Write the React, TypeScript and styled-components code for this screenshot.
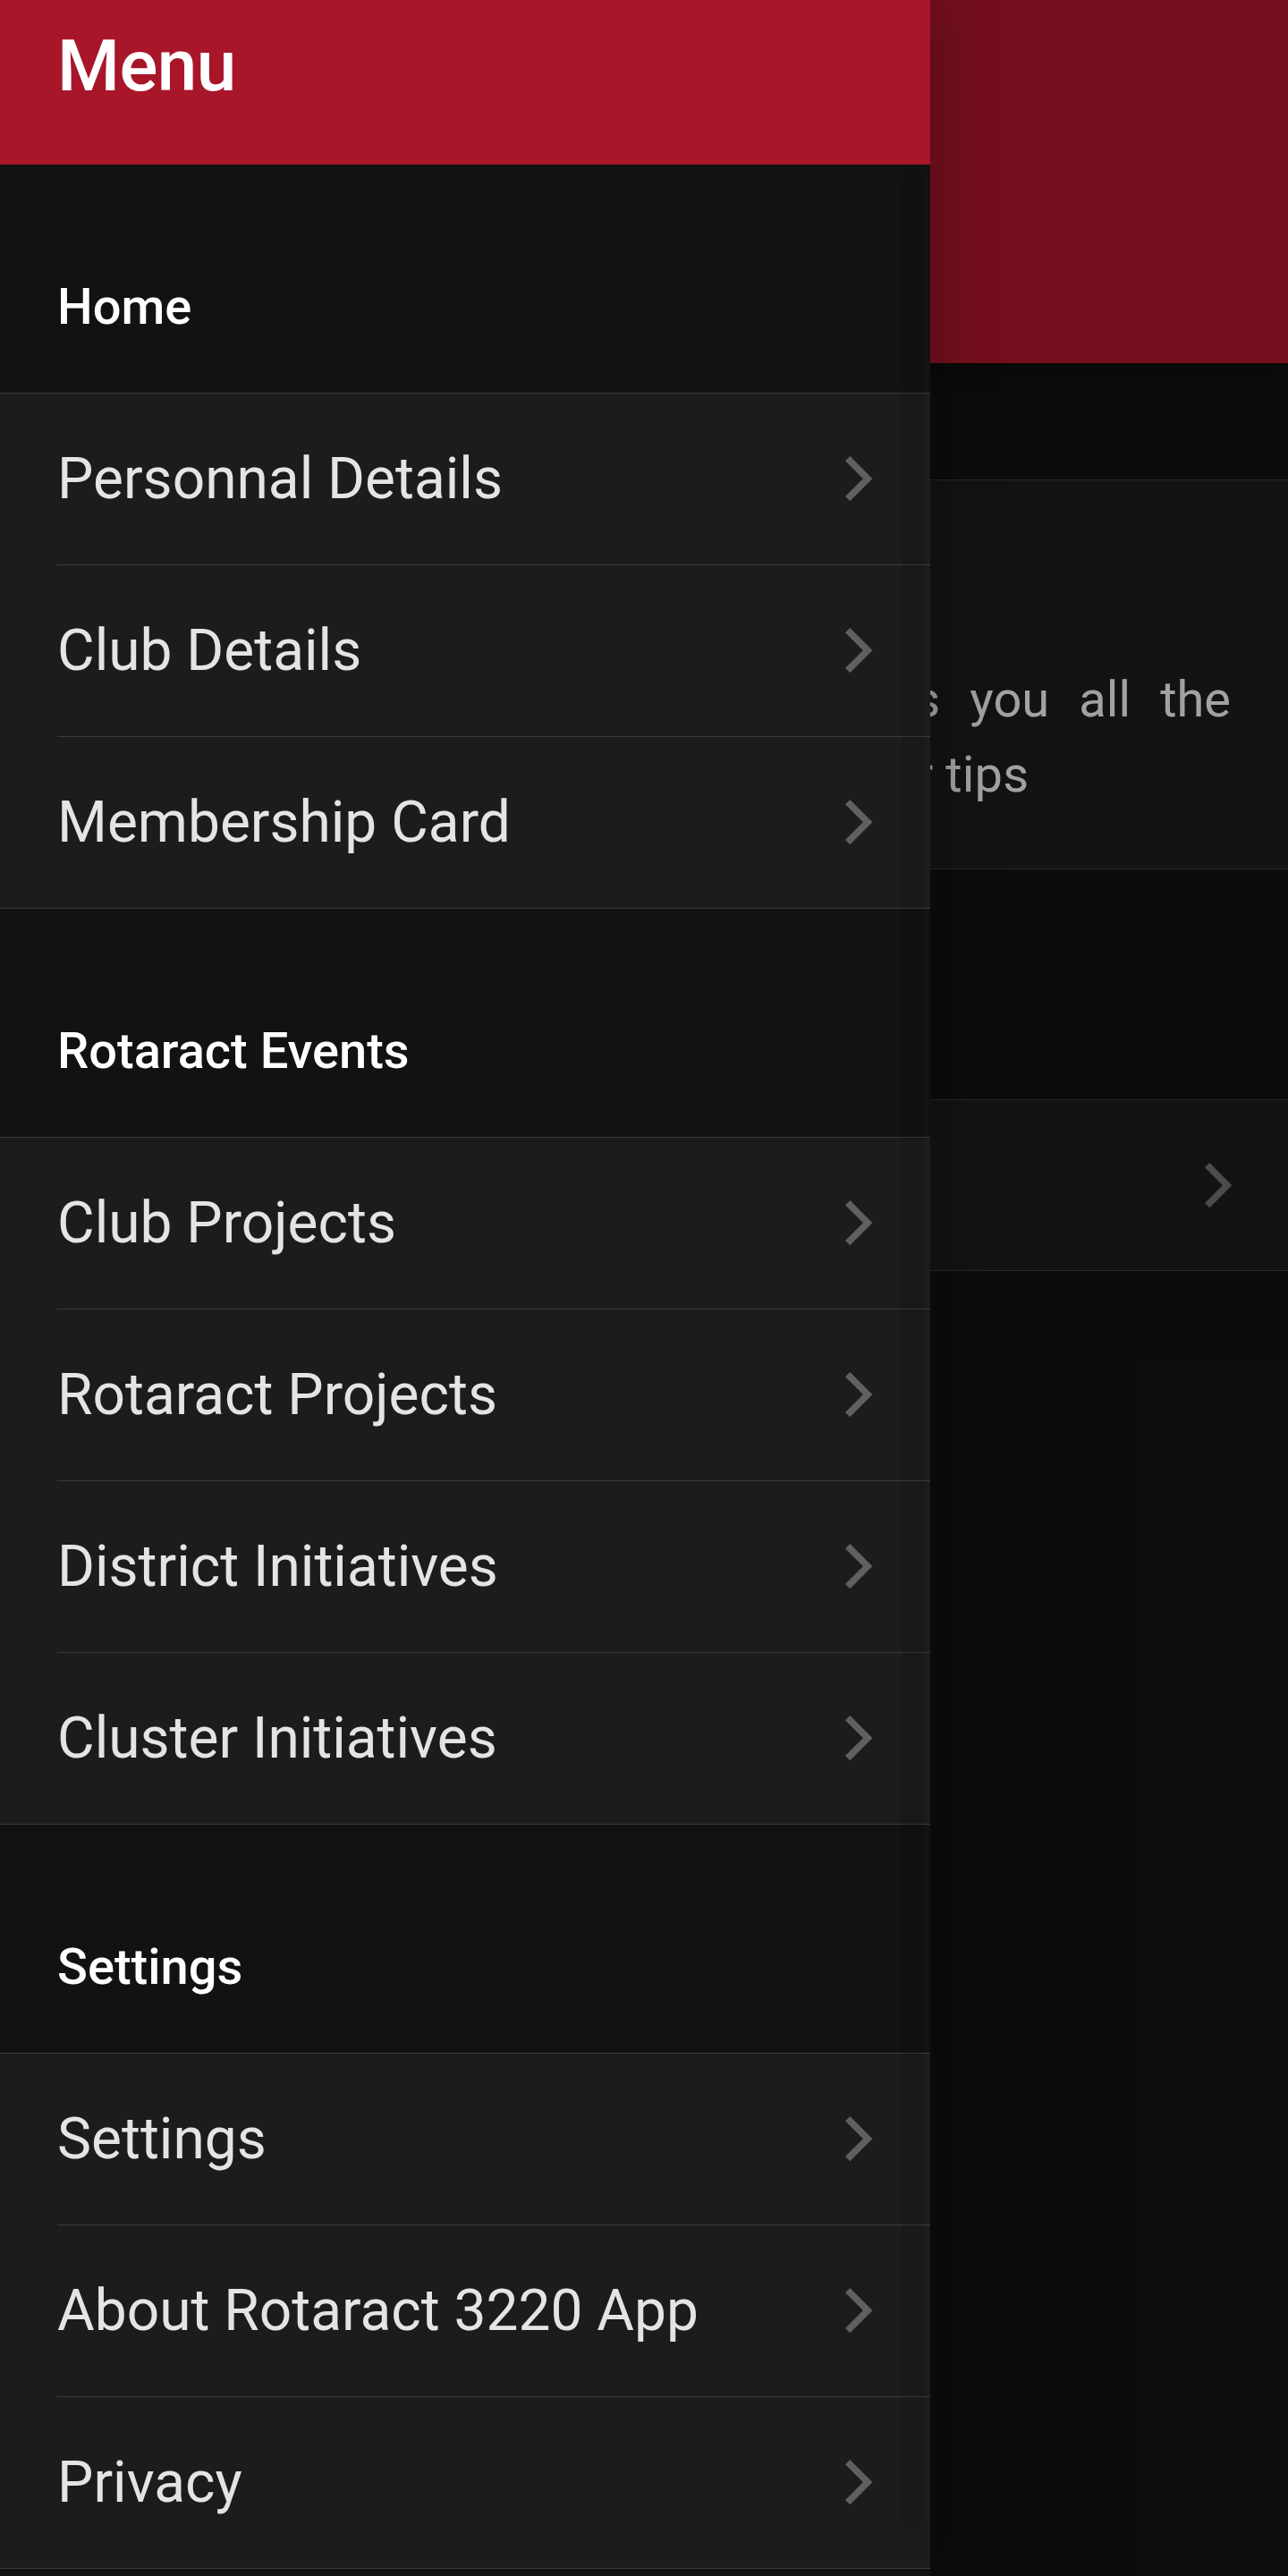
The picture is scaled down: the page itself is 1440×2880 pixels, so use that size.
import React from "react";
import styled, { createGlobalStyle } from "styled-components";

const GlobalStyle = createGlobalStyle`
  html, body {
    margin: 0;
    padding: 0;
    background: #121212;
  }
  * { box-sizing: border-box; }
`;

const Screen = styled.div`
  position: relative;
  width: 1440px;
  height: 2880px;
  overflow: hidden;
  background: #121212;
  font-family: Roboto, "Liberation Sans", Arial, sans-serif;
`;

/* ---------- underlying page (dimmed behind the menu) ---------- */

const PageHeader = styled.header`
  position: relative;
  z-index: 1;
  height: 406px;
  background: #a8162a;
  box-shadow: 0 8px 24px rgba(0, 0, 0, 0.35);
`;

const PageBody = styled.main`
  padding-top: 130px;
`;

const Card = styled.section`
  background: #1c1c1c;
  border-top: 1px solid #3a3a3a;
  border-bottom: 1px solid #3a3a3a;
  padding: 203px 64px 63px;
`;

const CardText = styled.p`
  margin: 0;
  font-size: 56px;
  line-height: 84px;
  color: #e8e8e8;
`;

const TextLine = styled.span<{ $justify?: boolean }>`
  display: block;
  text-align: ${(p) => (p.$justify ? "justify" : "left")};
  text-align-last: ${(p) => (p.$justify ? "justify" : "left")};
  letter-spacing: ${(p) => (p.$justify ? "0" : "0.15px")};
`;

const PageGap = styled.div`
  height: 257px;
`;

const PageRow = styled.div`
  height: 192px;
  background: #1c1c1c;
  border-top: 1px solid #3a3a3a;
  border-bottom: 1px solid #3a3a3a;
  display: flex;
  align-items: center;
  justify-content: flex-end;
  padding: 0 63px 0 64px;
`;

const Backdrop = styled.div`
  position: absolute;
  inset: 0;
  z-index: 5;
  background: rgba(0, 0, 0, 0.3);
`;

/* ---------- drawer ---------- */

const Drawer = styled.nav`
  position: absolute;
  left: 0;
  top: 0;
  z-index: 10;
  width: 1040px;
  height: 2880px;
  background: #121212;
  box-shadow: 16px 0 64px rgba(0, 0, 0, 0.22);
  display: flex;
  flex-direction: column;
`;

const DrawerHeader = styled.div`
  height: 184px;
  flex: none;
  background: #a8162a;
  padding: 34px 64px 0;
`;

const DrawerTitle = styled.h1`
  margin: 0;
  font-size: 80px;
  line-height: 80px;
  font-weight: 500;
  color: #ffffff;
  letter-spacing: -0.5px;
`;

const ScrollThumb = styled.div`
  position: absolute;
  top: 190px;
  left: 1008px;
  width: 24px;
  height: 2637px;
  border-radius: 12px;
  background: rgba(0, 0, 0, 0.1);
  pointer-events: none;
`;

const SectionHeader = styled.div`
  height: 255px;
  display: flex;
  align-items: flex-end;
  padding: 0 64px 68px;
  font-size: 56px;
  line-height: 56px;
  font-weight: 500;
  color: #ffffff;
`;

const Group = styled.ul`
  list-style: none;
  margin: 0;
  padding: 0;
  border-top: 1px solid #3a3a3a;
`;

const Row = styled.li<{ $last?: boolean }>`
  height: 192px;
  padding-left: 64px;
  background: #1c1c1c;
  border-bottom: ${(p) => (p.$last ? "1px solid #3a3a3a" : "none")};
`;

const RowInner = styled.div<{ $last?: boolean }>`
  height: 100%;
  display: flex;
  align-items: center;
  justify-content: space-between;
  padding-right: 65px;
  border-bottom: ${(p) => (p.$last ? "none" : "1px solid #3a3a3a")};
`;

const RowLabel = styled.span`
  font-size: 64px;
  color: #e4e4e4;
  white-space: nowrap;
`;

const ChevronSvg = styled.svg<{ $color: string }>`
  flex: none;
  width: 30.5px;
  height: 50.3px;
  color: ${(p) => p.$color};
`;

const Chevron = ({ color = "#606060" }: { color?: string }) => (
  <ChevronSvg $color={color} viewBox="167 95 195 322" aria-hidden="true">
    <polyline
      points="184 112 328 256 184 400"
      fill="none"
      stroke="currentColor"
      strokeWidth="48"
      strokeLinecap="butt"
      strokeLinejoin="miter"
    />
  </ChevronSvg>
);

const sections: { title: string; items: string[] }[] = [
  { title: "Home", items: ["Personnal Details", "Club Details", "Membership Card"] },
  {
    title: "Rotaract Events",
    items: ["Club Projects", "Rotaract Projects", "District Initiatives", "Cluster Initiatives"],
  },
  { title: "Settings", items: ["Settings", "About Rotaract 3220 App", "Privacy"] },
];

export default function App() {
  return (
    <>
      <GlobalStyle />
      <Screen>
        <PageHeader />
        <PageBody>
          <Card>
            <CardText>
              <TextLine $justify>The official Rotaract 3220 app gives you all the</TextLine>
              <TextLine>latest news, updates, events, plus other tips</TextLine>
            </CardText>
          </Card>
          <PageGap />
          <PageRow>
            <Chevron color="#6e6e6e" />
          </PageRow>
        </PageBody>
        <Backdrop />

        <Drawer>
          <DrawerHeader>
            <DrawerTitle>Menu</DrawerTitle>
          </DrawerHeader>
          {sections.map((s) => (
            <div key={s.title}>
              <SectionHeader>{s.title}</SectionHeader>
              <Group>
                {s.items.map((item, i) => {
                  const last = i === s.items.length - 1;
                  return (
                    <Row key={item} $last={last}>
                      <RowInner $last={last}>
                        <RowLabel>{item}</RowLabel>
                        <Chevron />
                      </RowInner>
                    </Row>
                  );
                })}
              </Group>
            </div>
          ))}
          <ScrollThumb />
        </Drawer>
      </Screen>
    </>
  );
}
